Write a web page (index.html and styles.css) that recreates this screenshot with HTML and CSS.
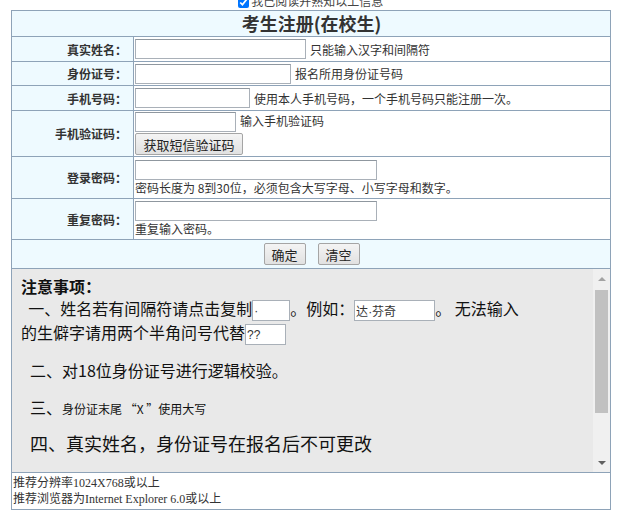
FILE: index.html
```html
<!DOCTYPE html>
<html lang="zh-CN">
<head>
  <meta charset="UTF-8" />
  <title>考生注册(在校生)</title>
  <link rel="stylesheet" href="styles.css">
</head>
<body>
  <div class="agree"><div class="agree-line"><input type="checkbox" checked> 我已阅读并熟知以上信息</div></div>

  <table class="reg">
    <tr class="title-row"><th colspan="2">考生注册(在校生)</th></tr>
    <tr class="r1">
      <td class="label">真实姓名：</td>
      <td><input class="txt w-name"><span class="tip">只能输入汉字和间隔符</span></td>
    </tr>
    <tr class="r2">
      <td class="label">身份证号：</td>
      <td><input class="txt w-id"><span class="tip">报名所用身份证号码</span></td>
    </tr>
    <tr class="r3">
      <td class="label">手机号码：</td>
      <td><input class="txt w-phone"><span class="tip">使用本人手机号码，一个手机号码只能注册一次。</span></td>
    </tr>
    <tr class="r4">
      <td class="label">手机验证码：</td>
      <td>
        <div><input class="txt w-code"><span class="tip top">输入手机验证码</span></div>
        <button class="btn sms">获取短信验证码</button>
      </td>
    </tr>
    <tr class="r5">
      <td class="label">登录密码：</td>
      <td>
        <input type="password" class="txt w-pwd">
        <div class="tip below">密码长度为 8到30位，必须包含大写字母、小写字母和数字。</div>
      </td>
    </tr>
    <tr class="r6">
      <td class="label">重复密码：</td>
      <td>
        <input type="password" class="txt w-pwd">
        <div class="tip below">重复输入密码。</div>
      </td>
    </tr>
    <tr class="actions">
      <td colspan="2"><button class="btn">确定</button><button class="btn">清空</button></td>
    </tr>
    <tr class="notice-row">
      <td colspan="2">
        <div class="notice">
          <div class="notice-body">
            <div class="notice-title">注意事项：</div>
            <p class="item">&nbsp;&nbsp;一、姓名若有间隔符请点击复制<input class="copy c-dot" value="·">。例如：<input class="copy c-eg" value="达·芬奇">。 无法输入<br>的生僻字请用两个半角问号代替<input class="copy c-q" value="??"></p>
            <p class="item two">二、对18位身份证号进行逻辑校验。</p>
            <p class="item three">三、<span class="small">身份证末尾 “X ”使用大写</span></p>
            <p class="item four">四、真实姓名，身份证号在报名后不可更改</p>
          </div>
          <div class="scrollbar">
            <div class="arrow up"></div>
            <div class="track"><div class="thumb"></div></div>
            <div class="arrow down"></div>
          </div>
        </div>
      </td>
    </tr>
    <tr class="foot">
      <td colspan="2">推荐分辨率1024X768或以上<br>推荐浏览器为Internet Explorer 6.0或以上</td>
    </tr>
  </table>
</body>
</html>
```

FILE: styles.css
```css
body {
  margin: 0;
  font-family: "Noto Sans CJK SC", "Noto Sans", sans-serif;
  font-size: 12px;
  color: #333;
  background: #fff;
}
.agree {
  height: 10px;
  overflow: hidden;
}
.agree-line {
  margin-top: -6px;
  line-height: 14px;
  text-align: center;
  font-size: 12px;
  color: #444;
}
.agree input {
  margin: 0;
  width: 11px;
  height: 11px;
  vertical-align: middle;
}
.reg {
  border-collapse: collapse;
  width: 600px;
  margin-left: 11px;
}
.reg td, .reg th {
  border: 1px solid #8ea3b8;
  padding: 0 0 0 1px;
}
.title-row th {
  height: 25px;
  background: #eefaff;
  font-size: 18px;
  font-weight: bold;
  color: #333;
  line-height: 25px;
}
.label {
  width: 114px;
  padding-right: 6px !important;
  text-align: right;
  font-weight: bold;
  background: #eefaff;
  color: #333;
}
.r1 td { height: 24px; }
.r2 td { height: 23px; }
.r3 td { height: 24px; }
.r4 td { height: 45px; }
.r5 td { height: 41px; }
.r6 td { height: 40px; }
.txt {
  box-sizing: border-box;
  height: 20px;
  margin: 0;
  border: 1px solid #a9b0b8;
  border-top-color: #8f979f;
  vertical-align: middle;
  font-size: 12px;
  padding: 1px 2px;
}
.w-name { width: 171px; }
.w-id { width: 156px; }
.w-phone { width: 115px; }
.w-code { width: 101px; }
.w-pwd { width: 242px; display: block; }
.tip {
  margin-left: 4px;
  vertical-align: middle;
  color: #333;
}
.tip.top { vertical-align: top; }
.tip.below {
  margin-left: 0;
  line-height: 16px;
}
.btn {
  box-sizing: border-box;
  height: 22px;
  margin: 0;
  padding: 0 5px;
  border: 1px solid #a5a5a5;
  border-radius: 2px;
  background: linear-gradient(#f4f4f4, #e1e1e1);
  font-family: "Noto Sans CJK SC", sans-serif;
  font-size: 13px;
  color: #222;
}
.btn.sms {
  display: block;
  margin-top: 1px;
  width: 108px;
}
.actions td {
  height: 28px;
  text-align: center;
  background: #eefaff;
}
.actions .btn {
  width: 42px;
  margin: 0 6px;
}
.notice-row td {
  padding: 0;
  height: 203px;
}
.notice {
  display: flex;
  height: 203px;
  background: #e9e9e9;
  overflow: hidden;
}
.notice-body {
  flex: 1;
  padding: 6px 0 0 9px;
  color: #111;
  font-size: 16px;
}
.notice-title {
  font-weight: bold;
  line-height: 22px;
}
.item {
  margin: 0;
  line-height: 23px;
}
.copy {
  box-sizing: border-box;
  height: 21px;
  margin: 0;
  border: 1px solid #a9b0b8;
  background: #fff;
  font-size: 12px;
  padding: 0 1px;
  color: #333;
  vertical-align: middle;
}
.c-dot { width: 38px; }
.c-eg { width: 81px; }
.c-q { width: 41px; }
.two { margin: 14px 0 0 9px; }
.three { margin: 14px 0 0 9px; }
.three .small { font-size: 12px; }
.four { margin: 12px 0 0 9px; font-size: 18px; }
.scrollbar {
  width: 17px;
  background: #f0f0f0;
  display: flex;
  flex-direction: column;
}
.arrow {
  height: 17px;
  position: relative;
}
.arrow::after {
  content: "";
  position: absolute;
  left: 5px;
  border-left: 4px solid transparent;
  border-right: 4px solid transparent;
}
.arrow.up::after {
  top: 8px;
  border-bottom: 4px solid #a3a3a3;
}
.arrow.down::after {
  top: 6px;
  border-top: 4px solid #606060;
}
.track {
  flex: 1;
  padding: 0 2px;
}
.thumb {
  margin-top: 4px;
  height: 123px;
  background: #c1c1c1;
}
.foot td {
  height: 36px;
  padding-left: 1px;
  font-family: "Liberation Serif", "Noto Sans CJK SC", serif;
  font-size: 12px;
  line-height: 16px;
  color: #333;
}
```
